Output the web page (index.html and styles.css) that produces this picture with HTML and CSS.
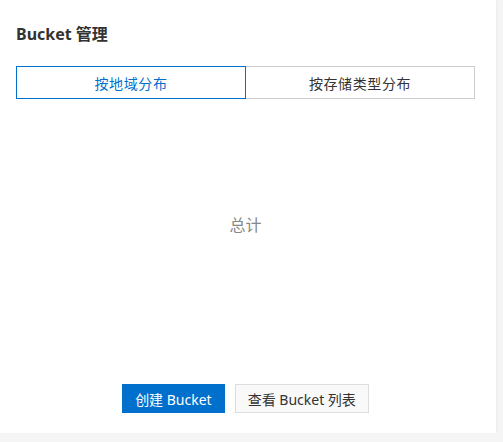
FILE: index.html
```html
<!DOCTYPE html>
<html lang="zh">
<head>
<meta charset="utf-8">
<link rel="stylesheet" href="styles.css">
</head>
<body>
<div class="card">
  <div class="title">Bucket 管理</div>
  <div class="tabs">
    <div class="tab active">按地域分布</div>
    <div class="tab">按存储类型分布</div>
  </div>
  <div class="chart">
    <div class="total">总计</div>
  </div>
  <div class="actions">
    <button class="btn primary">创建 Bucket</button>
    <button class="btn">查看 Bucket 列表</button>
  </div>
</div>
</body>
</html>
```
FILE: styles.css
```css
html, body {
  margin: 0;
  padding: 0;
  background: #f5f5f5;
  font-family: "Noto Sans", "Noto Sans CJK SC", sans-serif;
}
.card {
  box-sizing: border-box;
  width: 496px;
  height: 433px;
  background: #fff;
  box-shadow: 0 1px 3px rgba(0,0,0,0.08);
  padding: 20px 21px 20px 16px;
  display: flex;
  flex-direction: column;
}
.title {
  font-size: 16px;
  line-height: 28px;
  font-weight: 700;
  color: #333;
  margin-bottom: 18px;
}
.tabs {
  display: grid;
  grid-template-columns: 230px 1fr;
}
.tab {
  height: 33px;
  box-sizing: border-box;
  border: 1px solid #ccc;
  font-size: 14px;
  letter-spacing: 0.6px;
  color: #333;
  display: flex;
  align-items: center;
  justify-content: center;
}
.tab + .tab { margin-left: -1px; }
.tab.active {
  border-color: #0070cc;
  color: #0070cc;
  position: relative;
  z-index: 1;
}
.chart {
  flex: 1;
  padding-top: 114px;
  box-sizing: border-box;
}
.total {
  text-align: center;
  font-size: 16px;
  line-height: 24px;
  color: #888;
}
.actions {
  display: flex;
  justify-content: center;
  gap: 10px;
}
.btn {
  height: 29px;
  box-sizing: border-box;
  font-family: inherit;
  font-size: 14px;
  padding: 0 12px;
  border: 1px solid #ddd;
  background: #f9f9f9;
  color: #333;
  border-radius: 0;
  cursor: pointer;
}
.btn.primary {
  background: #0070cc;
  border-color: #0070cc;
  color: #fff;
}
```
